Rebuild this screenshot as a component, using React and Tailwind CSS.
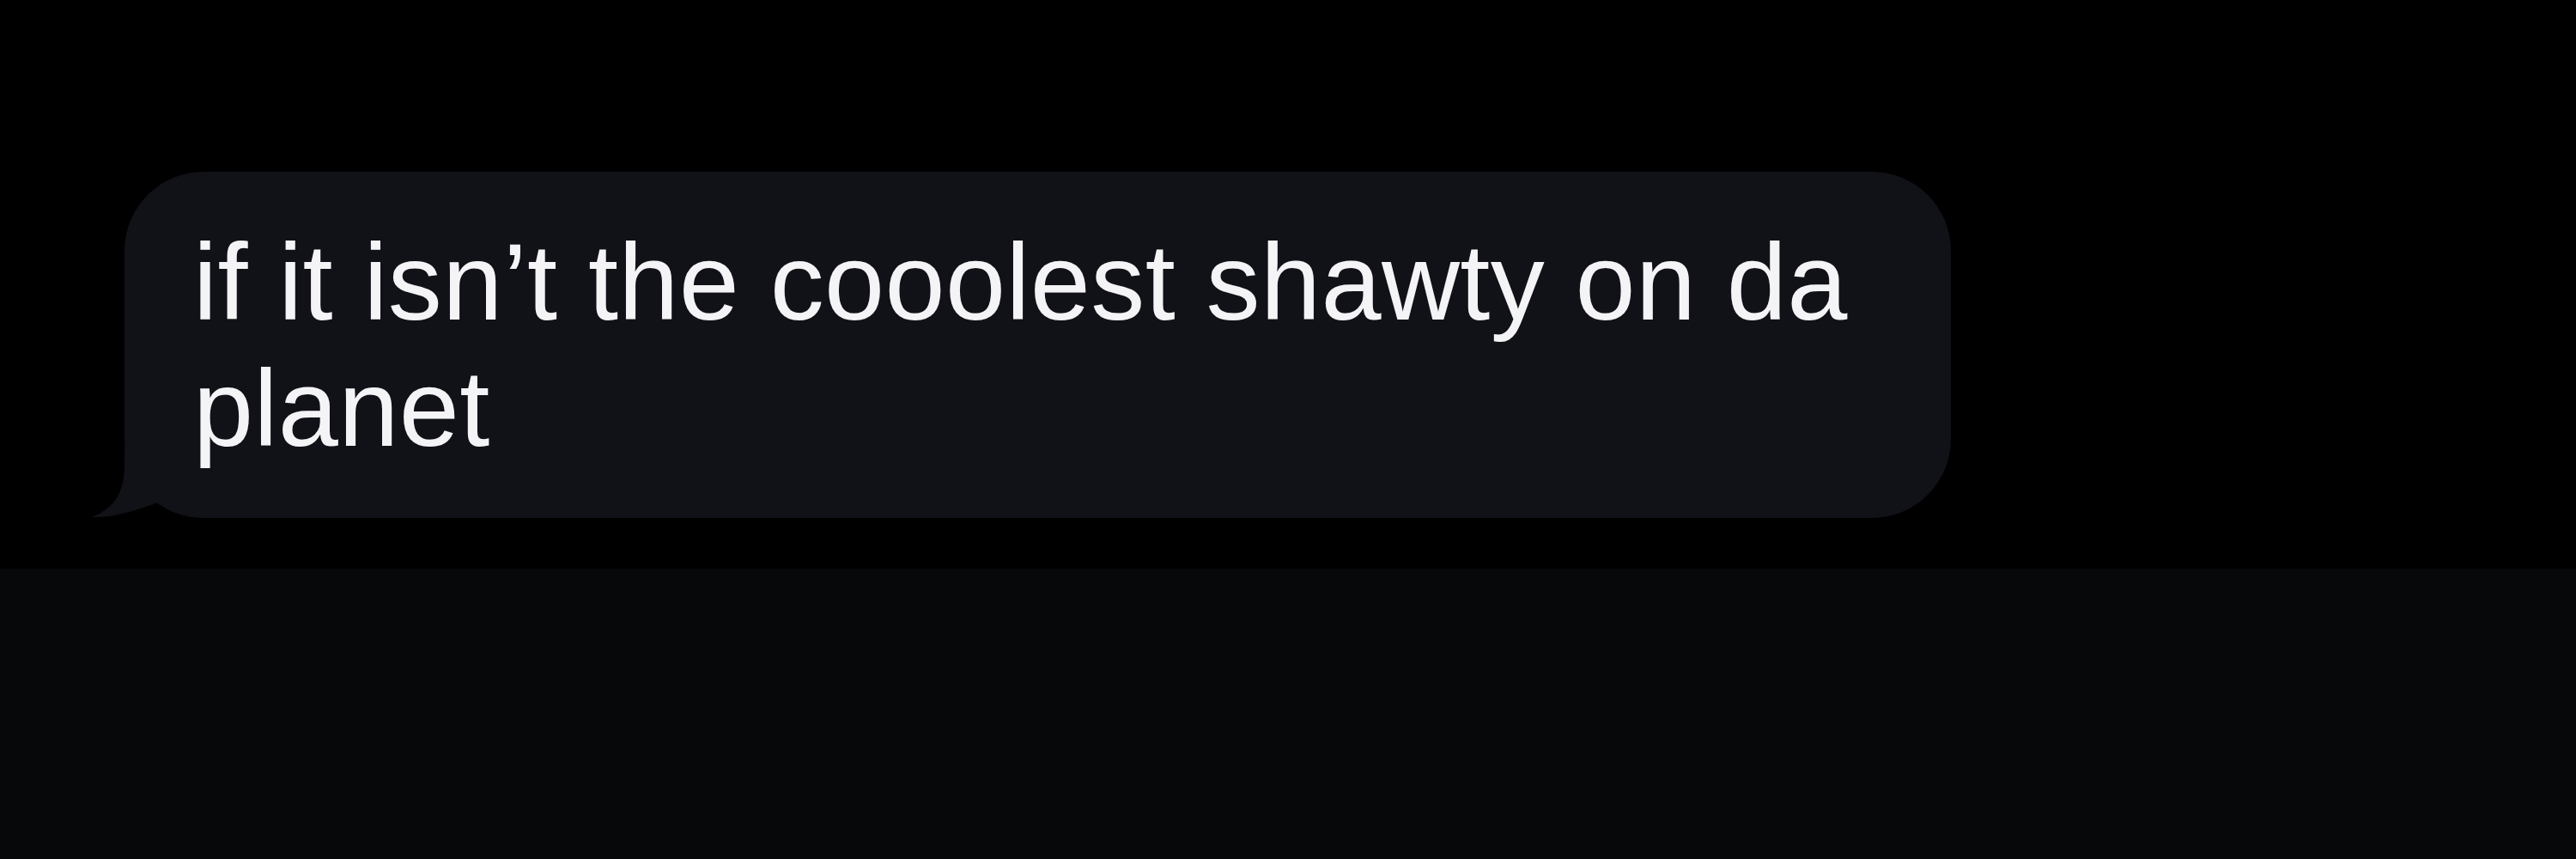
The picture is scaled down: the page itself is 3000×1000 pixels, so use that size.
import React from "react";

const BUBBLE = "#111218";

function Tail() {
  return (
    <svg
      className="absolute bottom-0 left-[-40px]"
      width="140"
      height="80"
      viewBox="0 0 140 80"
      aria-hidden="true"
    >
      <path
        d="M40 0 L40 18 C40 48 30 68 2 79 C30 80 55 70 85 60 C98 70 112 78 140 80 L140 0 Z"
        fill={BUBBLE}
      />
    </svg>
  );
}

export default function App() {
  return (
    <div className="flex h-[1000px] w-[3000px] flex-col bg-black font-['Liberation_Sans',Arial,sans-serif]">
      <section className="h-[662px] pl-[145px] pt-[200px]">
        <div className="relative w-[2127px] rounded-[92px] bg-[#111218] pb-[54px] pl-[80px] pr-[60px] pt-[55px]">
          <Tail />
          <p className="relative text-[126px] leading-[147px] tracking-[0.4px] text-[#f4f4f6]">
            if it isn’t the cooolest shawty on da planet
          </p>
        </div>
      </section>
      <section className="flex-1 bg-[#07080a]" />
    </div>
  );
}
